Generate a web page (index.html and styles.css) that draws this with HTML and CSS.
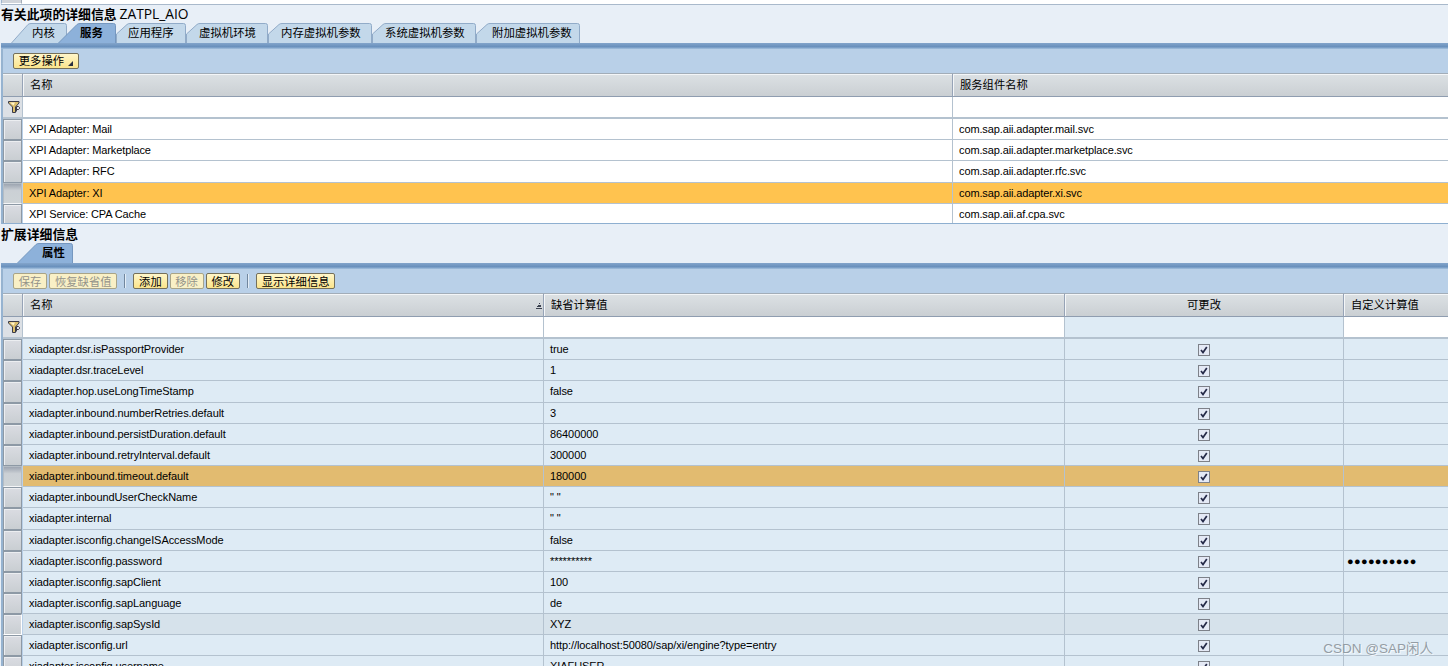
FILE: index.html
```
<!DOCTYPE html>
<html lang="zh-CN">
<head>
    <meta charset="UTF-8">
    <title>ZATPL_AIO</title>
    <link rel="stylesheet" href="styles.css">
</head>
<body class="page">
<div class="prev-table">
    <div class="prev-sel"></div>
    <div class="prev-cell"></div>
</div>

<div class="section section-services">
    <div class="title">有关此项的详细信息 <span class="title-id">ZATPL_AIO</span></div>
    <div class="tabs" id="serviceTabs"></div>
    <div class="tab-line"></div>
    <div class="panel">
        <div class="toolbar">
            <button class="btn btn-menu">更多操作<svg class="corner" width="5" height="5"><path d="M5 0V5H0Z" fill="#2b3040"/></svg></button>
        </div>
        <div class="grid grid-services" id="services">
            <div class="head sel"></div>
            <div class="head">名称</div>
            <div class="head head-last">服务组件名称</div>
        </div>
    </div>
</div>

<div class="section section-props">
    <div class="title">扩展详细信息</div>
    <div class="tabs" id="propTabs"></div>
    <div class="tab-line"></div>
    <div class="panel">
        <div class="toolbar">
            <button class="btn" disabled>保存</button>
            <button class="btn" disabled>恢复缺省值</button>
            <span class="sep"></span>
            <button class="btn">添加</button>
            <button class="btn" disabled>移除</button>
            <button class="btn">修改</button>
            <span class="sep"></span>
            <button class="btn">显示详细信息</button>
        </div>
        <div class="grid grid-props" id="props">
            <div class="head sel"></div>
            <div class="head head-sorted">名称
                <svg class="sort" width="6" height="6" shape-rendering="crispEdges"><path d="M3 0h1v1h-1zM2 2h3v1h-3zM1 3h4v1h-4zM0 5h6v1h-6z" fill="#3c4250"/></svg>
            </div>
            <div class="head">缺省计算值</div>
            <div class="head head-center">可更改</div>
            <div class="head head-last">自定义计算值</div>
        </div>
    </div>
</div>
<div class="watermark">CSDN @SAP闲人</div>

<script>
    // 宽度, 斜边宽度, 文字左边距
    var serviceTabs = [
        {text: '内核', width: 56, slant: 18, pad: 21, first: true},
        {text: '服务', width: 58, slant: 20, pad: 22, active: true},
        {text: '应用程序', width: 70, slant: 12, pad: 12},
        {text: '虚拟机环境', width: 82, slant: 12, pad: 13},
        {text: '内存虚拟机参数', width: 104, slant: 12, pad: 13},
        {text: '系统虚拟机参数', width: 104, slant: 12, pad: 13},
        {text: '附加虚拟机参数', width: 104, slant: 12, pad: 16}
    ];
    var propTabs = [
        {text: '属性', width: 56, slant: 20, pad: 25, active: true}
    ];

    var services = [
        ['XPI Adapter: Mail', 'com.sap.aii.adapter.mail.svc'],
        ['XPI Adapter: Marketplace', 'com.sap.aii.adapter.marketplace.svc'],
        ['XPI Adapter: RFC', 'com.sap.aii.adapter.rfc.svc'],
        ['XPI Adapter: XI', 'com.sap.aii.adapter.xi.svc'],
        ['XPI Service: CPA Cache', 'com.sap.aii.af.cpa.svc']
    ];

    var props = [
        ['xiadapter.dsr.isPassportProvider', 'true'],
        ['xiadapter.dsr.traceLevel', '1'],
        ['xiadapter.hop.useLongTimeStamp', 'false'],
        ['xiadapter.inbound.numberRetries.default', '3'],
        ['xiadapter.inbound.persistDuration.default', '86400000'],
        ['xiadapter.inbound.retryInterval.default', '300000'],
        ['xiadapter.inbound.timeout.default', '180000'],
        ['xiadapter.inboundUserCheckName', '" "'],
        ['xiadapter.internal', '" "'],
        ['xiadapter.isconfig.changeISAccessMode', 'false'],
        ['xiadapter.isconfig.password', '**********', '●●●●●●●●●●'],
        ['xiadapter.isconfig.sapClient', '100'],
        ['xiadapter.isconfig.sapLanguage', 'de'],
        ['xiadapter.isconfig.sapSysId', 'XYZ'],
        ['xiadapter.isconfig.url', 'http://localhost:50080/sap/xi/engine?type=entry'],
        ['xiadapter.isconfig.username', 'XIAFUSER']
    ];

    var funnel = '<svg width="13" height="13" viewBox="0 0 13 13">' +
        '<path d="M.5 .5h10.5v1.5L7.5 6v5.5h-3V6L.5 2z" fill="#d9bd6c" stroke="#3a3a48"/>' +
        '<path d="M2 1.5h5L5.5 4.5z" fill="#fff3cc"/>' +
        '<path d="M8.5 10.5v-5h2l1 1v1l-1 1h-2" fill="#e0e3ea" stroke="#3a3a48"/></svg>';
    var check = '<svg class="check" width="12" height="12" viewBox="0 0 12 12">' +
        '<rect x=".5" y=".5" width="11" height="11" fill="#e4e9f5" stroke="#7d8189"/>' +
        '<path d="M3 6l2 2.6L8.8 3" fill="none" stroke="#252a48" stroke-width="1.7"/></svg>';

    function add(parent, cls, html) {
        var el = document.createElement('div');
        el.className = cls;
        el.innerHTML = html || '';
        parent.appendChild(el);
        return el;
    }

    function drawTabs(id, tabs) {
        tabs.forEach(function (t) {
            var w = t.width, s = t.slant;
            // 普通页签的斜边只画到一半
            var low = t.active || t.first ? 20 : 11;
            var d = 'M.5 20V' + low + 'L' + (s - 1) + ' 1.5Q' + s + ' .5 ' + (s + 2) + ' .5H' + (w - 2.5) + 'Q' + (w - .5) + ' .5 ' + (w - .5) + ' 2.5V20';
            var el = add(document.getElementById(id), 'tab' + (t.active ? ' tab-active' : ''),
                '<svg class="tab-shape" width="' + w + '" height="20">' +
                '<path class="tab-face" d="' + d + '"/></svg><span>' + t.text + '</span>');
            el.style.width = w + 'px';
            el.style.paddingLeft = t.pad + 'px';
        });
    }

    function drawFilter(grid, classes) {
        add(grid, 'filter sel', funnel);
        classes.forEach(function (c) {
            add(grid, 'filter ' + c);
        });
    }

    drawTabs('serviceTabs', serviceTabs);
    drawTabs('propTabs', propTabs);

    var $services = document.getElementById('services');
    drawFilter($services, ['', 'filter-last']);
    services.forEach(function (r, i) {
        var state = i === 3 ? ' selected' : '';
        add($services, 'row-btn' + state);
        add($services, 'cell' + state, r[0]);
        add($services, 'cell cell-last' + state, r[1]);
    });

    var $props = document.getElementById('props');
    drawFilter($props, ['', '', 'filter-off', 'filter-last']);
    props.forEach(function (r, i) {
        var state = i === 6 ? ' selected' : i === 13 ? ' hover' : '';
        add($props, 'row-btn' + state);
        add($props, 'cell' + state, r[0]);
        add($props, 'cell' + state, r[1]);
        add($props, 'cell cell-check' + state, check);
        add($props, 'cell cell-last cell-custom' + state, r[2]);
    });
</script>
</body>
</html>
```
FILE: styles.css
```
* {
    box-sizing: border-box;
}

.page {
    margin: 0;
    height: 666px;
    overflow: hidden;
    background: #e8eff7;
    color: #000;
    font-family: "Liberation Sans", "Noto Sans CJK SC", sans-serif;
    font-size: 11px;
}

.prev-table {
    display: flex;
    height: 5px;
    margin-left: 1px;
    border-bottom: 1px solid #a9b9cb;
}

.prev-sel {
    width: 21px;
    background: #d0d4da;
    border-left: 1px solid #9fb6cf;
    border-right: 1px solid #a3acb8;
    border-bottom: 1px solid #fff;
}

.prev-cell {
    flex: 1;
    background: #fff;
}

.section-services {
    height: 219px;
}

.section-props {
    height: 442px;
    overflow: hidden;
}

.title {
    height: 18px;
    padding-left: 1px;
    line-height: 17px;
    font-family: "Noto Sans CJK SC", sans-serif;
    font-size: 12.85px;
    font-weight: bold;
    white-space: nowrap;
}

.section-props .title {
    height: 19px;
    line-height: 19px;
}

.title-id {
    font-family: "Open Sans", sans-serif;
    font-size: 13.8px;
    font-weight: 500;
}

.tabs {
    display: flex;
    height: 20px;
    padding-left: 11px;
    font-family: "Noto Sans CJK SC", sans-serif;
    font-size: 11.4px;
}

#propTabs {
    padding-left: 17px;
}

.tab {
    position: relative;
    height: 20px;
    line-height: 19px;
    white-space: nowrap;
}

.tab-active {
    z-index: 1;
    font-weight: bold;
}

#serviceTabs .tab-active {
    margin-left: -9px;
}

.tab span {
    position: relative;
}

.tab-shape {
    position: absolute;
    left: 0;
    top: 0;
}

.tab-face {
    fill: #c3d8ea;
    stroke: #91abc8;
}

.tab-active .tab-face {
    fill: #8db1da;
    stroke: #7597bf;
}

.tab-line {
    height: 6px;
    margin-left: 1px;
    background: linear-gradient(#83a5cb, #6a91bd 60%, #82a5cc 80%, #a9c5e0);
}

.panel {
    margin-left: 1px;
    border-left: 2px solid #96b3d0;
    background: #b9d0e8;
}

.section-services .panel {
    border-bottom: 1px solid #8eafd0;
}

.toolbar {
    display: flex;
    align-items: flex-start;
    gap: 2px;
    height: 24px;
    padding: 4px 0 0 10px;
}

.btn {
    height: 16px;
    padding: 0 4.8px;
    border: 1px solid #75705a;
    border-radius: 2px;
    background: linear-gradient(#fff6c9, #fbe48c);
    color: #000;
    font-family: "Noto Sans CJK SC", sans-serif;
    font-size: 11.3px;
    line-height: 12px;
    white-space: nowrap;
}

.btn:disabled {
    border-color: #a8a488;
    background: #f9f0c6;
    color: #94938a;
}

.btn-menu {
    display: flex;
    width: 66px;
}

.corner {
    flex: none;
    margin: 7px 0 0 4px;
}

.sep {
    width: 2px;
    height: 14px;
    margin: 1px 5px 0;
    border-left: 1px solid #71869d;
    border-right: 1px solid #e3edf7;
}

.grid {
    display: grid;
    grid-template-rows: 24px 22.1px;
    grid-auto-rows: 21.16px;
}

.grid-services {
    grid-template-columns: 20px 930px 1fr;
    height: 150px;
    overflow: hidden;
}

.grid-props {
    grid-template-columns: 20px 521px 521px 279px 1fr;
}

.head {
    padding-left: 7px;
    border-top: 1px solid #a2adb8;
    border-right: 1px solid #96a3b6;
    border-bottom: 1px solid #8f9db0;
    box-shadow: inset 1px 1px #f4f6f8;
    background: linear-gradient(#dce1e4, #cacfd3);
    font-family: "Noto Sans CJK SC", sans-serif;
    font-size: 11.3px;
    line-height: 20px;
}

.head.sel {
    box-shadow: inset 0 1px #f4f6f8;
}

.head-sorted {
    display: flex;
    justify-content: space-between;
    padding-right: 1px;
}

.sort {
    margin-top: 9px;
}

.head-center {
    padding: 0;
    text-align: center;
}

.filter {
    border-right: 1px solid #b4c2cf;
    border-bottom: 2px solid #b4c2cf;
    background: #fff;
}

.filter.sel {
    padding: 4px 0 0 5px;
    background: #dce0e5;
    line-height: 0;
}

.filter-off {
    background: #deebf5;
}

.row-btn {
    margin-right: 1px;
    border: 1px solid #8d99a5;
    box-shadow: inset 1px 1px #eceef1;
    background: linear-gradient(#dadce2, #c9ced2);
}

.row-btn.selected {
    border-color: #b4bcc4 #b4bcc4 #f5f6f8;
    box-shadow: none;
    background: linear-gradient(#9da5b1, #cbd0d5 35%, #cdd3d6);
}

.row-btn.hover {
    border-right-color: #fff;
    border-bottom-color: #fff;
}

.cell {
    padding-left: 6px;
    border-right: 1px solid #b4c2cf;
    border-bottom: 1px solid #b4c2cf;
    letter-spacing: -0.08px;
    line-height: 21px;
    white-space: nowrap;
}

.head-last,
.filter-last,
.cell-last {
    border-right: 0;
}

.grid-services .cell {
    background: #fff;
    letter-spacing: -0.12px;
}

.grid-props .cell {
    background: #deebf5;
}

.grid-services .cell.selected {
    background: #ffc34f;
}

.grid-props .cell.selected {
    background: #e2bb70;
}

.grid-props .cell.hover {
    background: #d6e2eb;
}

.cell-check {
    display: flex;
    justify-content: center;
    padding: 5px 0 0;
}

.grid-props .cell-custom {
    padding-left: 3px;
    letter-spacing: 0.32px;
}

.watermark {
    position: absolute;
    right: 15px;
    bottom: 7px;
    color: #949da5;
    font-family: "Liberation Sans", "Noto Sans CJK SC", sans-serif;
    font-size: 13.5px;
    line-height: 20px;
    text-shadow: 1px 1px #f4f8fb;
}
```
